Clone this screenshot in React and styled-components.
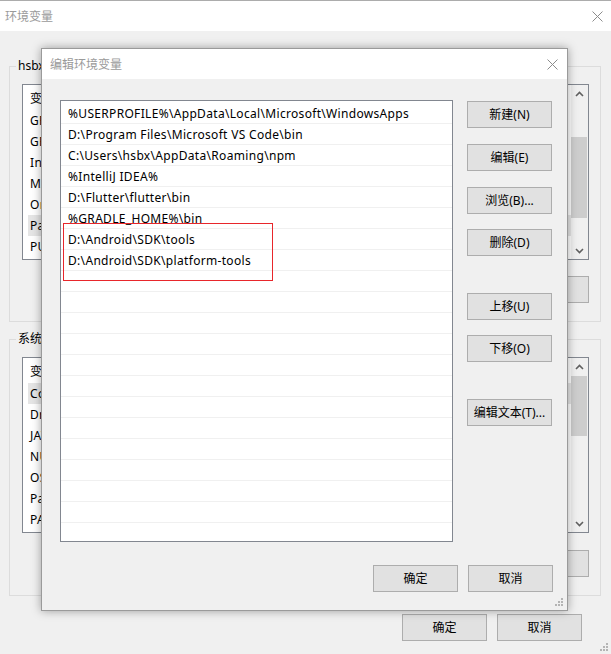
import React from 'react'
import styled, {createGlobalStyle} from 'styled-components'

const GlobalStyle = createGlobalStyle`
  html, body {
    margin: 0;
    padding: 0;
    background: #f0f0f0;
  }
  body {
    font-family: "Noto Sans", "Noto Sans CJK SC", sans-serif;
    font-size: 12px;
    color: #000;
  }
  * {
    box-sizing: border-box;
  }
`

// back window (环境变量)
const Window = styled.div`
  position: relative;
  width: 611px;
  height: 654px;
  border-top: 1px solid #acacac;
  background: #f0f0f0;
  overflow: hidden;
`

const TitleBar = styled.div`
  height: 30px;
  background: #fff;
  display: flex;
  align-items: center;
  justify-content: space-between;
  padding: 0 ${p => p.$right}px 0 ${p => p.$left}px;
`

const TitleText = styled.span`
  color: #9a9a9a;
  font-family: "Noto Sans CJK SC", sans-serif;
  font-size: 12px;
  line-height: 16px;
`

const Body = styled.div`
  padding: 27px 10px 0 9px;
  display: flex;
  flex-direction: column;
`

const Group = styled.fieldset`
  margin: ${p => p.$top}px 0 0;
  padding: 10px 11px 18px 12px;
  border: 1px solid #dcdcdc;
  min-width: 0;
`

const Legend = styled.legend`
  margin-left: -6px;
  padding: 0 2px;
  line-height: 16px;
  font-size: 12px;
`

const ListView = styled.div`
  height: 176px;
  border: 1px solid #828790;
  background: #fff;
  display: flex;
  overflow: hidden;
`

const ListBody = styled.div`
  flex: 1;
  min-width: 0;
`

const HeaderRow = styled.div`
  display: flex;
  height: 25px;
  align-items: center;
  margin-left: 5px;
`

const VarRow = styled.div`
  display: flex;
  height: 21px;
  align-items: center;
  margin-left: 5px;
  letter-spacing: 0.32px;
  background: ${p => (p.$selected ? '#e5e5e5' : 'transparent')};
`

const Cell = styled.div`
  padding-left: 2px;
  white-space: nowrap;
`

const ScrollBar = styled.div`
  width: 17px;
  background: #f0f0f0;
  display: flex;
  flex-direction: column;
`

const ScrollArrow = styled.div`
  height: 17px;
  display: flex;
  align-items: center;
  justify-content: center;
`

const Track = styled.div`
  flex: 1;
  padding: 0 1px 0 0;
`

const Thumb = styled.div`
  margin-top: ${p => p.$offset}px;
  height: ${p => p.$size}px;
  background: #cdcdcd;
`

const ButtonRow = styled.div`
  display: flex;
  justify-content: flex-end;
  gap: 10px;
  margin-top: ${p => p.$top}px;
  padding-right: ${p => p.$right || 0}px;
`

const Button = styled.button`
  width: 85px;
  height: 27px;
  flex-shrink: 0;
  margin-top: ${p => p.$mt || 0}px;
  border: 1px solid #adadad;
  background: #e1e1e1;
  font-family: "Noto Sans", "Noto Sans CJK SC", sans-serif;
  font-size: 12px;
  line-height: 16px;
  color: #000;
  padding: 0;
`

const Grip = styled.svg`
  position: absolute;
  right: ${p => p.$r}px;
  bottom: ${p => p.$b}px;
`

// front dialog (编辑环境变量)
const Dialog = styled.div`
  position: absolute;
  left: 41px;
  top: 47px;
  width: 527px;
  height: 563px;
  border: 1px solid #9a9a9a;
  background: #f0f0f0;
  box-shadow: 0 0 9px rgba(0, 0, 0, 0.35);
  display: flex;
  flex-direction: column;
`

const DialogBody = styled.div`
  display: flex;
  gap: 14px;
  padding: 21px 14px 0 18px;
`

const PathList = styled.div`
  position: relative;
  width: 393px;
  height: 442px;
  border: 1px solid #828790;
  background: #fff;
  padding-top: 2px;
  overflow: hidden;
`

const PathRow = styled.div`
  height: 21px;
  border-bottom: 1px solid #f0f0f0;
  padding-left: 7px;
  display: flex;
  align-items: center;
  white-space: nowrap;
  letter-spacing: 0.32px;
`

const Highlight = styled.div`
  position: absolute;
  left: 2px;
  top: 122px;
  width: 210px;
  height: 58px;
  border: 1px solid #e8262b;
  pointer-events: none;
`

const ButtonColumn = styled.div`
  display: flex;
  flex-direction: column;
`

const CloseIcon = ({color}) => (
  <svg width="11" height="11" viewBox="0 0 11 11">
    <path d="M0.5 0.5 L10.5 10.5 M10.5 0.5 L0.5 10.5" stroke={color} strokeWidth="1" />
  </svg>
)

const Chevron = ({down}) => (
  <svg width="9" height="6" viewBox="0 0 9 6">
    <polyline
      points={down ? '1,1 4.5,4.5 8,1' : '1,5 4.5,1.5 8,5'}
      fill="none"
      stroke="#606060"
      strokeWidth="1.6"
    />
  </svg>
)

const GripDots = ({r, b}) => (
  <Grip $r={r} $b={b} width="9" height="9" viewBox="0 0 9 9">
    {[[6, 0], [3, 3], [6, 3], [0, 6], [3, 6], [6, 6]].map(([x, y]) => (
      <rect key={x + '-' + y} x={x} y={y} width="2" height="2" fill="#b4b4b4" />
    ))}
  </Grip>
)

const userVars = ['GRADLE_HOME', 'GRADLE_USER_HOME', 'IntelliJ IDEA', 'MAVEN_HOME', 'OneDrive', 'Path', 'PUB_HOSTED_URL']

const systemVars = ['ComSpec', 'DriverData', 'JAVA_HOME', 'NUMBER_OF_PROCESSORS', 'OS', 'Path', 'PATHEXT']

const paths = [
  '%USERPROFILE%\\AppData\\Local\\Microsoft\\WindowsApps',
  'D:\\Program Files\\Microsoft VS Code\\bin',
  'C:\\Users\\hsbx\\AppData\\Roaming\\npm',
  '%IntelliJ IDEA%',
  'D:\\Flutter\\flutter\\bin',
  '%GRADLE_HOME%\\bin',
  'D:\\Android\\SDK\\tools',
  'D:\\Android\\SDK\\platform-tools',
]

const sideButtons = [
  ['新建(N)', 1],
  ['编辑(E)', 16],
  ['浏览(B)...', 16],
  ['删除(D)', 15],
  ['上移(U)', 37],
  ['下移(O)', 15],
  ['编辑文本(T)...', 37],
]

// the value column sits entirely under the front dialog, so only names are listed
function VarList({rows, selected, thumbOffset, thumbSize}) {
  return (
    <ListView>
      <ListBody>
        <HeaderRow>
          <Cell>变量</Cell>
        </HeaderRow>
        {rows.map((name, i) => (
          <VarRow key={name} $selected={i === selected}>
            <Cell>{name}</Cell>
          </VarRow>
        ))}
      </ListBody>
      <ScrollBar>
        <ScrollArrow><Chevron /></ScrollArrow>
        <Track>
          <Thumb $offset={thumbOffset} $size={thumbSize} />
        </Track>
        <ScrollArrow><Chevron down /></ScrollArrow>
      </ScrollBar>
    </ListView>
  )
}

export default function App() {
  const rows = Array.from({length: 20}, (_, i) => paths[i] || '')

  return (
    <>
      <GlobalStyle />
      <Window>
        <TitleBar $left={5} $right={8}>
          <TitleText>环境变量</TitleText>
          <CloseIcon color="#8c8c8c" />
        </TitleBar>

        <Body>
          <Group $top={0}>
            <Legend>hsbx 的用户变量(U)</Legend>
            <VarList rows={userVars} selected={5} thumbOffset={35} thumbSize={81} />
            <ButtonRow $top={16}>
              <Button>新建(N)...</Button>
              <Button>编辑(E)...</Button>
              <Button>删除(D)</Button>
            </ButtonRow>
          </Group>

          <Group $top={9}>
            <Legend>系统变量(S)</Legend>
            <VarList rows={systemVars} selected={0} thumbOffset={1} thumbSize={60} />
            <ButtonRow $top={17}>
              <Button>新建(W)...</Button>
              <Button>编辑(I)...</Button>
              <Button>删除(L)</Button>
            </ButtonRow>
          </Group>

          <ButtonRow $top={18} $right={19}>
            <Button>确定</Button>
            <Button>取消</Button>
          </ButtonRow>
        </Body>
        <GripDots r={2} b={2} />

        <Dialog>
          <TitleBar $left={8} $right={9}>
            <TitleText>编辑环境变量</TitleText>
            <CloseIcon color="#8c8c8c" />
          </TitleBar>

          <DialogBody>
            <PathList>
              {rows.map((p, i) => (
                <PathRow key={i}>{p}</PathRow>
              ))}
              <Highlight />
            </PathList>

            <ButtonColumn>
              {sideButtons.map(([label, mt]) => (
                <Button key={label} $mt={mt}>{label}</Button>
              ))}
            </ButtonColumn>
          </DialogBody>

          <ButtonRow $top={23} $right={14}>
            <Button>确定</Button>
            <Button>取消</Button>
          </ButtonRow>
          <GripDots r={3} b={3} />
        </Dialog>
      </Window>
    </>
  )
}
